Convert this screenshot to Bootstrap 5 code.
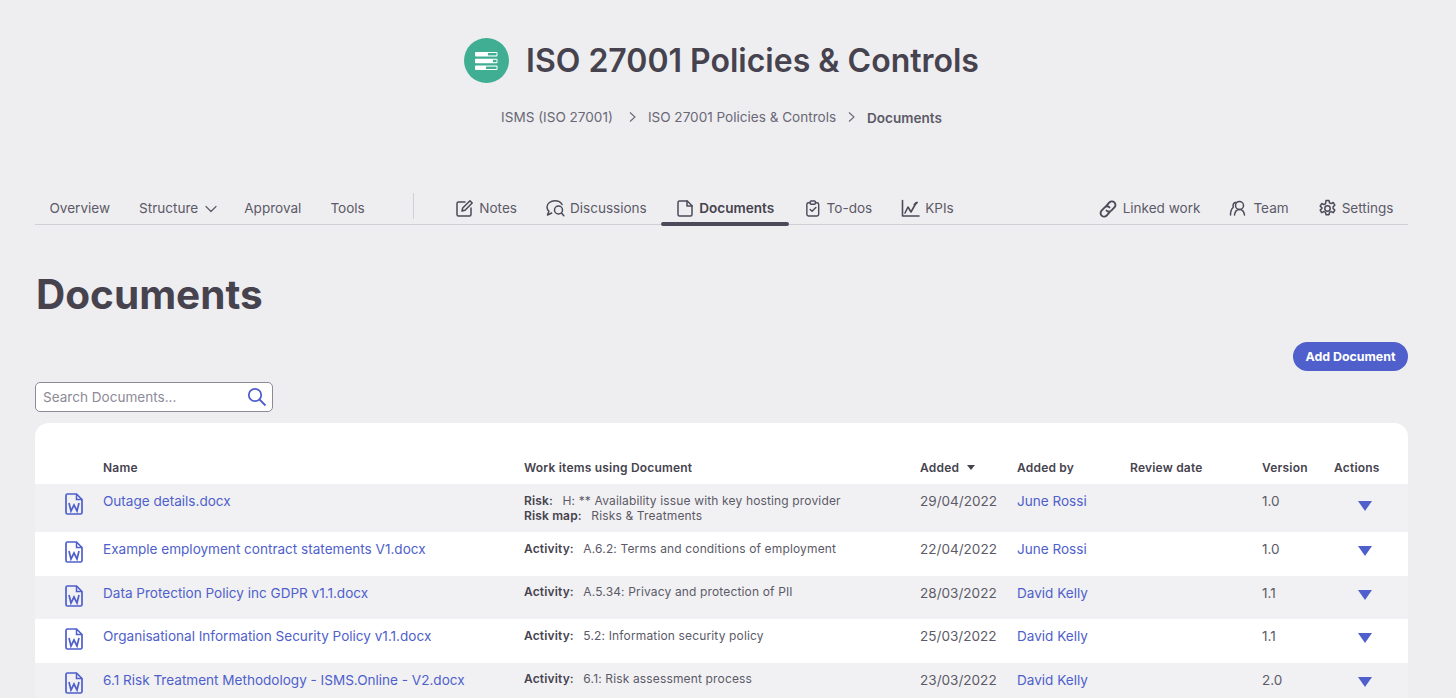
<!doctype html>
<html lang="en"><head><meta charset="utf-8"><title>Documents</title>
<link href="https://cdn.jsdelivr.net/npm/bootstrap@5.3.0/dist/css/bootstrap.min.css" rel="stylesheet">
<style>
html,body{height:698px;overflow:hidden}
body{background:#eeeef1;font-family:Inter,"Liberation Sans",sans-serif;color:#46434f;font-size:13.55px}
.pg{padding:0 48px 0 35px}
.hero{height:193px;padding-top:38px}
.hicon{width:45px;height:45px;background:#40ae93;border-radius:50%}
.htitle{font-size:32px;font-weight:600;line-height:45px;margin:0 0 0 17px;color:#46434f}
.crumbs{margin-top:24px;line-height:20px;color:#6a6875}
.crumb-sep{margin:0 11px 0 15px}
.crumb-sep2{margin:0 11px 0 11px}
.crumbs b{font-weight:600;color:#5c5a67;position:relative;top:1px}
.tabbar{height:32px;border-bottom:1px solid #cfcfd6;color:#5c5a67;position:relative}
.tb{display:flex;align-items:center;gap:5px;height:31px;padding:0 14.5px;white-space:nowrap;position:relative}
.tb svg{flex:none;stroke-linejoin:round;stroke-linecap:round}
.tb.act{font-weight:600;color:#46434f;padding:0 15px 0 16px;gap:6px}
.tb.act:after{content:"";position:absolute;left:0;right:0;bottom:-2px;height:4px;border-radius:3px;background:#4c4a58}
.tb.caret{padding-right:12.5px;gap:7px}
.vsep{width:1px;height:26px;background:#cfcfd6;margin:0 26.5px 0 34px;align-self:flex-start}
.h1x{font-size:40.5px;font-weight:700;line-height:50px;margin:45px 0 0 1px;color:#46434f}
.addb{background:#4f5fcb;color:#fff;font-size:12.4px;font-weight:700;border-radius:15px;height:29px;line-height:29px;padding:0 12.5px;border:0;display:block}
.addwrap{margin-top:22px}
.sbox{width:238px;height:30px;border:1px solid #8c8a97;border-radius:5px;background:#fff;margin-top:11px;padding:0 7px;color:#8d8b97}
.sbox svg{margin-right:-2px}
.panel{background:#fff;border-radius:14px 14px 0 0;margin-top:11px;padding-top:30px;height:300px}
.gridrow{display:grid;grid-template-columns:68px 421px 396px 97px 113px 132px 72px 74px;align-items:start}
.head{font-size:12px;font-weight:600;height:31px;line-height:29px;color:#46434f;letter-spacing:.2px}
.rw{color:#5c5a67;padding-top:8px;height:43.6px}
.rw.alt{background:#f1f1f3}
.rw.tall{height:48px}
.rw>div{line-height:18px}
.fic{padding-left:29px}
.lk{color:#4f5fcb}
.rw>.wk{font-size:12px;line-height:15px;color:#5c5a67;letter-spacing:.15px;padding-top:.6px}
.wk b{font-weight:600;color:#46434f;margin-right:6px}
.tri{width:0;height:0;border-left:7.5px solid transparent;border-right:7.5px solid transparent;border-top:10px solid #4f5fcb;margin:6px 0 0 24px}
.tall .tri{margin-top:9px}
.sort{display:inline-block;width:0;height:0;border-left:4.500px solid transparent;border-right:4.500px solid transparent;border-top:5px solid #46434f;margin-left:5px;vertical-align:2px}
</style></head><body>
<svg width="0" height="0" class="d-block"><defs><symbol id="w" viewBox="0 0 20 24"><g fill="none" stroke="#4f5fcb"><path stroke-width="1.700" d="M3.500 2h9L18 7.500V20.500a1.500 1.500 0 0 1-1.500 1.500h-13A1.500 1.500 0 0 1 2 20.500v-17A1.500 1.500 0 0 1 3.500 2z"/><path stroke-width="1.500" d="M12.500 2v5.500H18"/><path stroke-width="1.700" d="M5 11l2 8 3-6 3 6 2-8"/></g></symbol></defs></svg>
<div class="pg">
<div class="hero">
<div class="d-flex justify-content-center">
<div class="d-flex align-items-center">
<div class="hicon d-flex align-items-center justify-content-center"><svg width="24" height="20" viewBox="0 0 24 20"><g fill="#fff"><rect x="0" y="1" width="22.5" height="4.4" rx="1"/><rect x="0" y="7.8" width="22.5" height="4.4" rx="1"/><rect x="0" y="14.6" width="22.5" height="4.4" rx="1"/></g><g fill="#40ae93"><rect x="13" y="2" width="8.5" height="2.4"/><rect x="18" y="8.8" width="3.5" height="2.4"/><rect x="11" y="15.6" width="10.5" height="2.4"/></g></svg></div>
<h2 class="htitle">ISO 27001 Policies &amp; Controls</h2>
</div></div>
<div class="crumbs d-flex justify-content-center align-items-center"><span>ISMS (ISO 27001)</span><svg class="crumb-sep" width="9" height="12" viewBox="0 0 9 12"><path d="M2 1.500 7 6 2 10.500" fill="none" stroke="#6a6875" stroke-width="1.100"/></svg><span>ISO 27001 Policies &amp; Controls</span><svg class="crumb-sep2" width="9" height="12" viewBox="0 0 9 12"><path d="M2 1.500 7 6 2 10.500" fill="none" stroke="#6a6875" stroke-width="1.100"/></svg><b>Documents</b></div>
</div>

<div class="tabbar d-flex">
<div class="tb">Overview</div>
<div class="tb caret">Structure <svg width="12" height="8" viewBox="0 0 12 8"><path d="M1 1.500 6 6.500 11 1.500" fill="none" stroke="#5c5a67" stroke-width="1.200"/></svg></div>
<div class="tb">Approval</div>
<div class="tb">Tools</div>
<div class="vsep"></div>
<div class="tb"><svg width="19" height="19" viewBox="0 0 19 19" fill="none" stroke="#4c4a58" stroke-width="1.500"><path d="M10 3H3.500A1.500 1.500 0 0 0 2 4.500v11A1.500 1.500 0 0 0 3.500 17h11a1.500 1.500 0 0 0 1.500-1.500V9"/><path d="M7 12l.7-3L15 1.800l2.200 2.200L10 11.300z"/></svg>Notes</div>
<div class="tb"><svg width="19" height="19" viewBox="0 0 19 19" fill="none" stroke="#4c4a58" stroke-width="1.500"><path d="M16 5.500C14.800 3.300 12.300 1.800 9 1.800 4.800 1.800 1 4.300 1 8c0 1.700.7 3.100 1.900 4.200L1.500 16l4.200-2"/><circle cx="12.500" cy="11" r="4"/><path d="M15.500 14l2.300 2.800"/></svg>Discussions</div>
<div class="tb act"><svg width="16" height="19" viewBox="0 0 16 19" fill="none" stroke="#4c4a58" stroke-width="1.500"><path d="M2.500 2h7.800L15 6.700V15.500A1.500 1.500 0 0 1 13.500 17h-11A1.500 1.500 0 0 1 1 15.500v-12A1.500 1.500 0 0 1 2.500 2z"/><path d="M10 2v5h5"/></svg>Documents</div>
<div class="tb"><svg width="18" height="19" viewBox="0 0 19 19" fill="none" stroke="#4c4a58" stroke-width="1.500"><rect x="3" y="3.500" width="12.500" height="14" rx="1.800"/><rect x="6.500" y="1.500" width="5.500" height="3.500" rx="1" fill="#eeeef1"/><path d="M6.500 10.500l2 2 4-4"/></svg>To-dos</div>
<div class="tb"><svg width="19" height="19" viewBox="0 0 19 19" fill="none" stroke="#4c4a58" stroke-width="1.600"><path d="M1.500 1.500V17H18"/><path d="M4 14l3-6 3 5 5-9"/><path d="M13.500 5.500 16 3.500" stroke-width="2"/></svg>KPIs</div>
<div class="ms-auto d-flex">
<div class="tb"><svg width="20" height="20" viewBox="0 0 19 19" fill="none" stroke="#4c4a58" stroke-width="1.800"><path d="M8 6.500l2.800-3.200a3.300 3.300 0 0 1 4.800 4.700l-3 3a3.300 3.300 0 0 1-4.500 0"/><path d="M11 12.500l-2.800 3.200a3.300 3.300 0 0 1-4.800-4.700l3-3a3.300 3.300 0 0 1 4.500 0"/></svg>Linked work</div>
<div class="tb"><svg width="19" height="19" viewBox="0 0 18 19" fill="none" stroke="#4c4a58" stroke-width="1.500"><circle cx="10" cy="6.500" r="4"/><path d="M7 3.500C4.500 3 3 5 3.700 8.500 1.700 10 1 13 1 16"/><path d="M5 16c.5-3.500 2.500-5.500 5-5.500s4.500 2 5 5.500"/></svg>Team</div>
<div class="tb"><svg width="19" height="19" viewBox="0 0 19 19" fill="none" stroke="#4c4a58" stroke-width="1.500"><circle cx="9.500" cy="9.500" r="2.700"/><path d="M8 1.500h3l.5 2.300 1.700.8 2.100-1.100 1.500 2.600-1.700 1.600v1.800l1.700 1.600-1.500 2.600-2.100-1.100-1.700.8-.5 2.300H8l-.5-2.300-1.700-.8-2.100 1.100-1.500-2.600 1.700-1.600V8.700L2.200 7.100l1.500-2.600 2.100 1.100 1.700-.8z"/></svg>Settings</div>
</div>
</div>

<h1 class="h1x">Documents</h1>
<div class="addwrap d-flex justify-content-end"><button class="addb">Add Document</button></div>
<div class="sbox d-flex align-items-center justify-content-between"><span>Search Documents...</span><svg width="20" height="20" viewBox="0 0 20 20" fill="none" stroke="#4f5fcb" stroke-width="1.800"><circle cx="8" cy="8" r="6.200"/><path d="M12.500 12.500 18.500 18.500"/></svg></div>

<div class="panel">
<div class="gridrow head"><div></div><div>Name</div><div>Work items using Document</div><div>Added <span class="sort"></span></div><div>Added by</div><div>Review date</div><div>Version</div><div>Actions</div></div>

<div class="gridrow rw alt tall"><div class="fic"><svg width="20" height="24"><use href="#w"/></svg></div><div class="lk">Outage details.docx</div><div class="wk"><b>Risk:</b> H: ** Availability issue with key hosting provider<br><b>Risk map:</b> Risks &amp; Treatments</div><div>29/04/2022</div><div class="lk">June Rossi</div><div></div><div>1.0</div><div><div class="tri"></div></div></div>

<div class="gridrow rw"><div class="fic"><svg width="20" height="24"><use href="#w"/></svg></div><div class="lk">Example employment contract statements V1.docx</div><div class="wk"><b>Activity:</b> A.6.2: Terms and conditions of employment</div><div>22/04/2022</div><div class="lk">June Rossi</div><div></div><div>1.0</div><div><div class="tri"></div></div></div>

<div class="gridrow rw alt"><div class="fic"><svg width="20" height="24"><use href="#w"/></svg></div><div class="lk">Data Protection Policy inc GDPR v1.1.docx</div><div class="wk"><b>Activity:</b> A.5.34: Privacy and protection of PII</div><div>28/03/2022</div><div class="lk">David Kelly</div><div></div><div>1.1</div><div><div class="tri"></div></div></div>

<div class="gridrow rw"><div class="fic"><svg width="20" height="24"><use href="#w"/></svg></div><div class="lk">Organisational Information Security Policy v1.1.docx</div><div class="wk"><b>Activity:</b> 5.2: Information security policy</div><div>25/03/2022</div><div class="lk">David Kelly</div><div></div><div>1.1</div><div><div class="tri"></div></div></div>

<div class="gridrow rw alt"><div class="fic"><svg width="20" height="24"><use href="#w"/></svg></div><div class="lk">6.1 Risk Treatment Methodology - ISMS.Online - V2.docx</div><div class="wk"><b>Activity:</b> 6.1: Risk assessment process</div><div>23/03/2022</div><div class="lk">David Kelly</div><div></div><div>2.0</div><div><div class="tri"></div></div></div>
</div>
</div>
<script src="https://cdn.jsdelivr.net/npm/bootstrap@5.3.0/dist/js/bootstrap.bundle.min.js"></script>
</body></html>
